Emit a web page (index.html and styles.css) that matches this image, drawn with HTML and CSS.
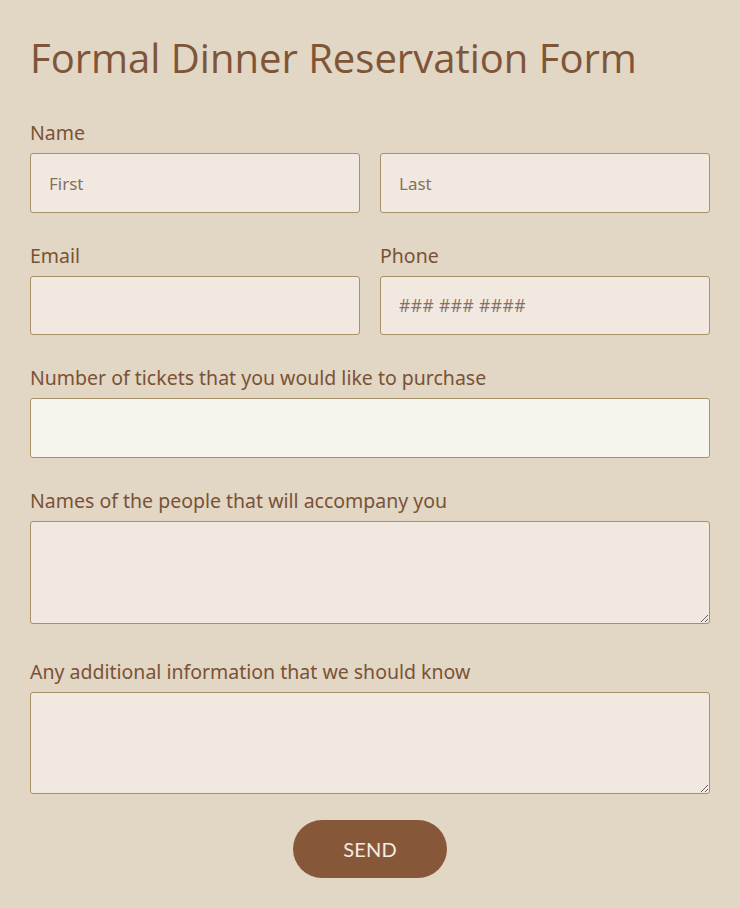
FILE: index.html
```html
<!DOCTYPE html>
<html>
<head>
<meta charset="utf-8">
<link rel="stylesheet" href="styles.css">
</head>
<body>
<form class="form">
  <h1 class="title">Formal Dinner Reservation Form</h1>
  <div class="row">
    <div class="field">
      <label class="label">Name</label>
      <input class="input" type="text" placeholder="First">
    </div>
    <div class="field">
      <label class="label label-empty">&nbsp;</label>
      <input class="input" type="text" placeholder="Last">
    </div>
  </div>
  <div class="row">
    <div class="field">
      <label class="label">Email</label>
      <input class="input input-short" type="text">
    </div>
    <div class="field">
      <label class="label">Phone</label>
      <input class="input input-short input-phone" type="text" placeholder="### ### ####">
    </div>
  </div>
  <div class="field">
    <label class="label">Number of tickets that you would like to purchase</label>
    <input class="input input-light" type="text">
  </div>
  <div class="field field-tall">
    <label class="label">Names of the people that will accompany you</label>
    <textarea class="input textarea"></textarea>
  </div>
  <div class="field">
    <label class="label">Any additional information that we should know</label>
    <textarea class="input textarea textarea-short"></textarea>
  </div>
  <div class="actions">
    <button class="send" type="button">SEND</button>
  </div>
</form>
</body>
</html>
```
FILE: styles.css
```css
html, body {
  margin: 0;
  padding: 0;
  background: #e2d6c4;
}
.form {
  box-sizing: border-box;
  width: 740px;
  padding: 0 30px 30px 30px;
  display: flex;
  flex-direction: column;
  gap: 31px;
}
.title {
  margin: 28px 0 2px 0;
  font-family: "Open Sans", sans-serif;
  font-weight: 400;
  font-size: 40px;
  line-height: 60px;
  color: #7f5538;
}
.row {
  display: grid;
  grid-template-columns: 1fr 1fr;
  gap: 20px;
}
.field {
  display: flex;
  flex-direction: column;
  gap: 8px;
}
.field-tall {
  margin-bottom: 5px;
}
.label {
  font-family: "Noto Sans", sans-serif;
  font-size: 19.5px;
  line-height: 24px;
  color: #7a5236;
}
.input {
  box-sizing: border-box;
  display: block;
  width: 100%;
  height: 60px;
  margin: 0;
  padding: 0 18px;
  background: #f1e9df;
  border: 1px solid #a89068;
  border-radius: 3px;
  font-family: "Noto Sans", sans-serif;
  font-size: 17px;
  color: #6e5443;
  outline: none;
}
.input-short {
  height: 59px;
}
.input::placeholder {
  color: #86705f;
}
.input-phone::placeholder {
  font-family: "Open Sans", sans-serif;
  font-size: 17.5px;
  letter-spacing: 0.4px;
}
.input-light {
  background: #f7f4ee;
}
.textarea {
  height: 103px;
  padding: 12px 18px;
  resize: vertical;
}
.textarea-short {
  height: 102px;
}
.actions {
  display: flex;
  justify-content: center;
  margin-top: -5px;
}
.send {
  width: 154px;
  height: 58px;
  border: none;
  border-radius: 29px;
  background: #87573a;
  color: #f6ebe0;
  font-family: "Lato", sans-serif;
  font-size: 20px;
  letter-spacing: 0.2px;
  cursor: pointer;
}
```
